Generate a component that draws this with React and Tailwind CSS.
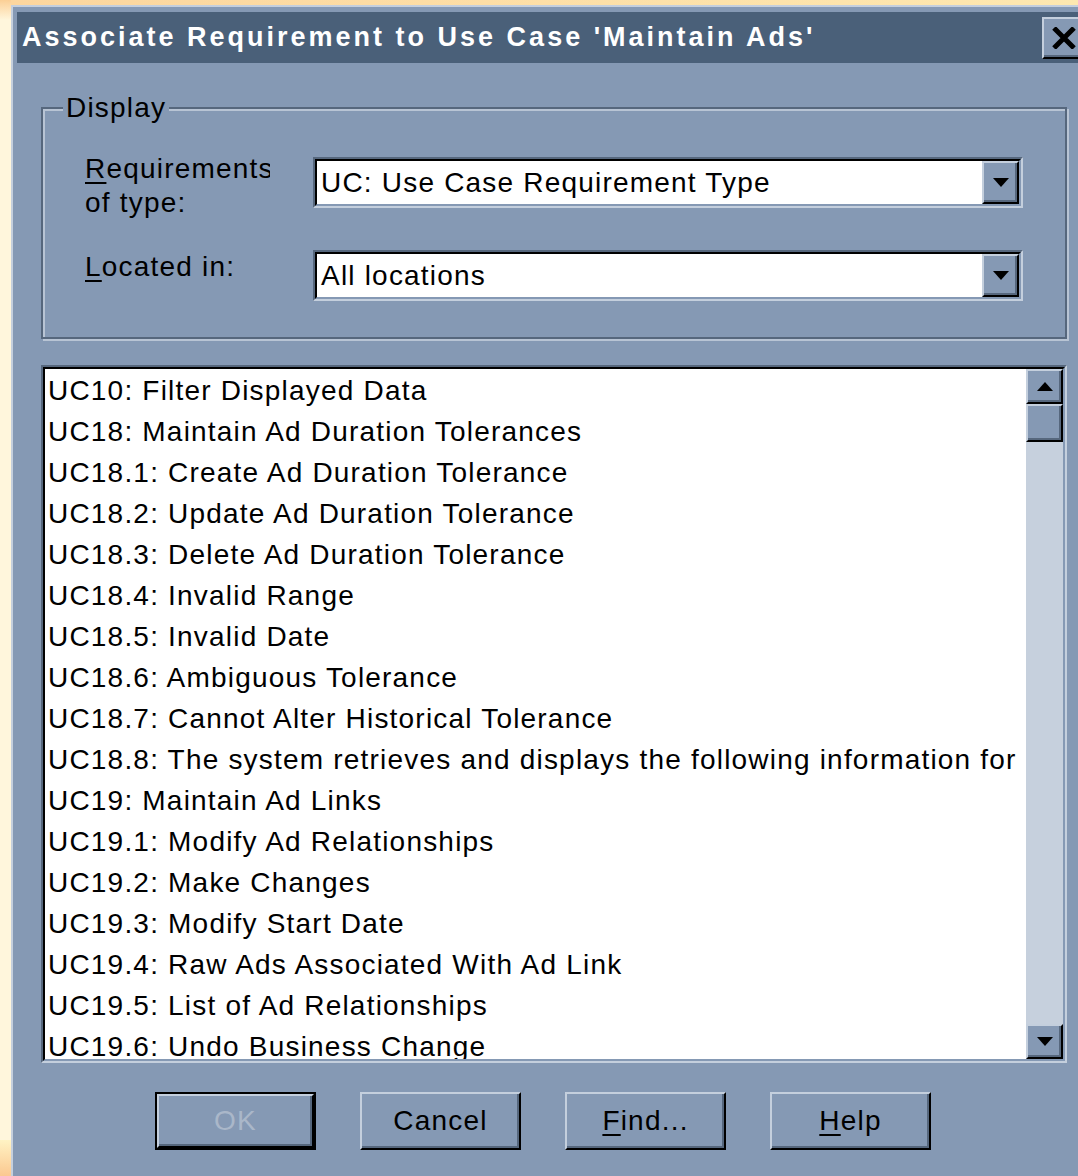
import React from "react";

const items = [
  "UC10: Filter Displayed Data",
  "UC18: Maintain Ad Duration Tolerances",
  "UC18.1: Create Ad Duration Tolerance",
  "UC18.2: Update Ad Duration Tolerance",
  "UC18.3: Delete Ad Duration Tolerance",
  "UC18.4: Invalid Range",
  "UC18.5: Invalid Date",
  "UC18.6: Ambiguous Tolerance",
  "UC18.7: Cannot Alter Historical Tolerance",
  "UC18.8: The system retrieves and displays the following information for a",
  "UC19: Maintain Ad Links",
  "UC19.1: Modify Ad Relationships",
  "UC19.2: Make Changes",
  "UC19.3: Modify Start Date",
  "UC19.4: Raw Ads Associated With Ad Link",
  "UC19.5: List of Ad Relationships",
  "UC19.6: Undo Business Change",
];

// small black triangle used on combo and scroll buttons
function Arrow({ up }) {
  return (
    <svg width="16" height="9" viewBox="0 0 16 9">
      {up ? <polygon points="8,0 16,9 0,9" fill="#000" /> : <polygon points="0,0 16,0 8,9" fill="#000" />}
    </svg>
  );
}

// raised 3d face (buttons, thumbs)
function Raised({ className = "", children }) {
  return (
    <div
      className={`flex items-center justify-center bg-[#8599b4] border-2 border-t-[#c4cfdd] border-l-[#c4cfdd] border-b-black border-r-black shadow-[inset_-2px_-2px_0_#56677d] ${className}`}
    >
      {children}
    </div>
  );
}

function Combo({ value }) {
  return (
    <div className="flex-1 h-[51px] border-2 border-t-[#56677d] border-l-[#56677d] border-b-[#c4cfdd] border-r-[#c4cfdd]">
      <div className="h-full flex border-2 border-t-black border-l-black border-b-[#8599b4] border-r-[#8599b4] bg-white">
        <div className="flex-1 pl-[4px] leading-[43px] text-black whitespace-nowrap overflow-hidden">{value}</div>
        <Raised className="w-[37px] h-full">
          <Arrow />
        </Raised>
      </div>
    </div>
  );
}

function Button({ children, disabled, primary }) {
  const face = (
    <Raised className={`h-full w-full ${disabled ? "text-[#aab7c9]" : "text-black"}`}>
      {children}
    </Raised>
  );
  if (primary) {
    return <div className="w-[161px] h-[58px] border-2 border-black">{face}</div>;
  }
  return <div className="w-[161px] h-[58px]">{face}</div>;
}

export default function App() {
  return (
    <div
      className="w-[1078px] h-[1176px] flex bg-[#fff6dc] overflow-hidden text-[28px] tracking-[1.2px]"
      style={{ fontFamily: '"Liberation Sans", Arial, sans-serif' }}
    >
      {/* desktop strip on the left */}
      <div className="w-[11px] shrink-0 flex flex-col">
        <div className="h-[20px] bg-gradient-to-b from-[#fbcf95] to-[#fff6dc]" />
        <div className="flex-1" />
        <div className="h-[36px] bg-gradient-to-b from-[#fff3c4] to-[#fbc890]" />
      </div>

      <div className="flex flex-col">
        <div className="h-[5px] w-[1067px] bg-gradient-to-r from-[#fcd69e] to-[#fde8b0]" />

        {/* dialog window */}
        <div className="w-[1084px] flex-1 bg-[#8599b4] border-t-2 border-l-2 border-[#c4cfdd] pt-[5px] px-[4px]">
          <div className="h-[51px] bg-[#4a6079] flex items-center justify-between pl-[5px] pr-[5px]">
            <span className="text-white font-bold text-[27px] whitespace-nowrap tracking-[3px]">
              Associate Requirement to Use Case 'Maintain Ads'
            </span>
            <Raised className="w-[44px] h-[42px]">
              <svg width="24" height="22" viewBox="0 0 24 22">
                <path d="M2 1 L22 21 M22 1 L2 21" stroke="#000" strokeWidth="5" />
              </svg>
            </Raised>
          </div>

          <div className="px-[24px]">
            {/* Display group */}
            <fieldset className="mt-[30px] border-2 border-[#56677d] shadow-[inset_2px_2px_0_#b8c4d4,2px_2px_0_#b8c4d4] pb-[36px]">
              <legend className="ml-[20px] px-[3px] leading-[30px] bg-[#8599b4] text-black">Display</legend>
              <div className="px-[42px] pt-[34px]">
                <div className="flex items-start h-[51px]">
                  <div className="w-[185px] shrink-0 mr-[43px] -mt-[5px] leading-[34px] text-black">
                    <div className="whitespace-nowrap overflow-hidden">
                      <u className="underline-offset-4">R</u>equirements
                    </div>
                    <div>of type:</div>
                  </div>
                  <Combo value="UC: Use Case Requirement Type" />
                </div>
                <div className="flex items-start h-[51px] mt-[42px]">
                  <div className="w-[185px] shrink-0 mr-[43px] leading-[34px] text-black">
                    <u className="underline-offset-4">L</u>ocated in:
                  </div>
                  <Combo value="All locations" />
                </div>
              </div>
            </fieldset>

            {/* requirement list */}
            <div className="mt-[26px] h-[698px] border-2 border-t-[#56677d] border-l-[#56677d] border-b-[#c4cfdd] border-r-[#c4cfdd]">
              <div className="h-full flex border-2 border-t-black border-l-black border-b-[#8599b4] border-r-[#8599b4] bg-white">
                <div className="flex-1 overflow-hidden pl-[3px] pt-[1px]">
                  {items.map((t) => (
                    <div key={t} className="h-[41px] leading-[41px] whitespace-nowrap text-black">
                      {t}
                    </div>
                  ))}
                </div>
                <div className="w-[37px] shrink-0 flex flex-col bg-[#c6d0dd]">
                  <Raised className="h-[35px]">
                    <Arrow up />
                  </Raised>
                  <Raised className="h-[38px]" />
                  <div className="flex-1" />
                  <Raised className="h-[35px]">
                    <Arrow />
                  </Raised>
                </div>
              </div>
            </div>
          </div>

          {/* dialog buttons */}
          <div className="mt-[29px] pl-[138px] flex gap-[44px]">
            <Button primary disabled>OK</Button>
            <Button>Cancel</Button>
            <Button>
              <span>
                <u className="underline-offset-4">F</u>ind...
              </span>
            </Button>
            <Button>
              <span>
                <u className="underline-offset-4">H</u>elp
              </span>
            </Button>
          </div>
        </div>
      </div>
    </div>
  );
}
